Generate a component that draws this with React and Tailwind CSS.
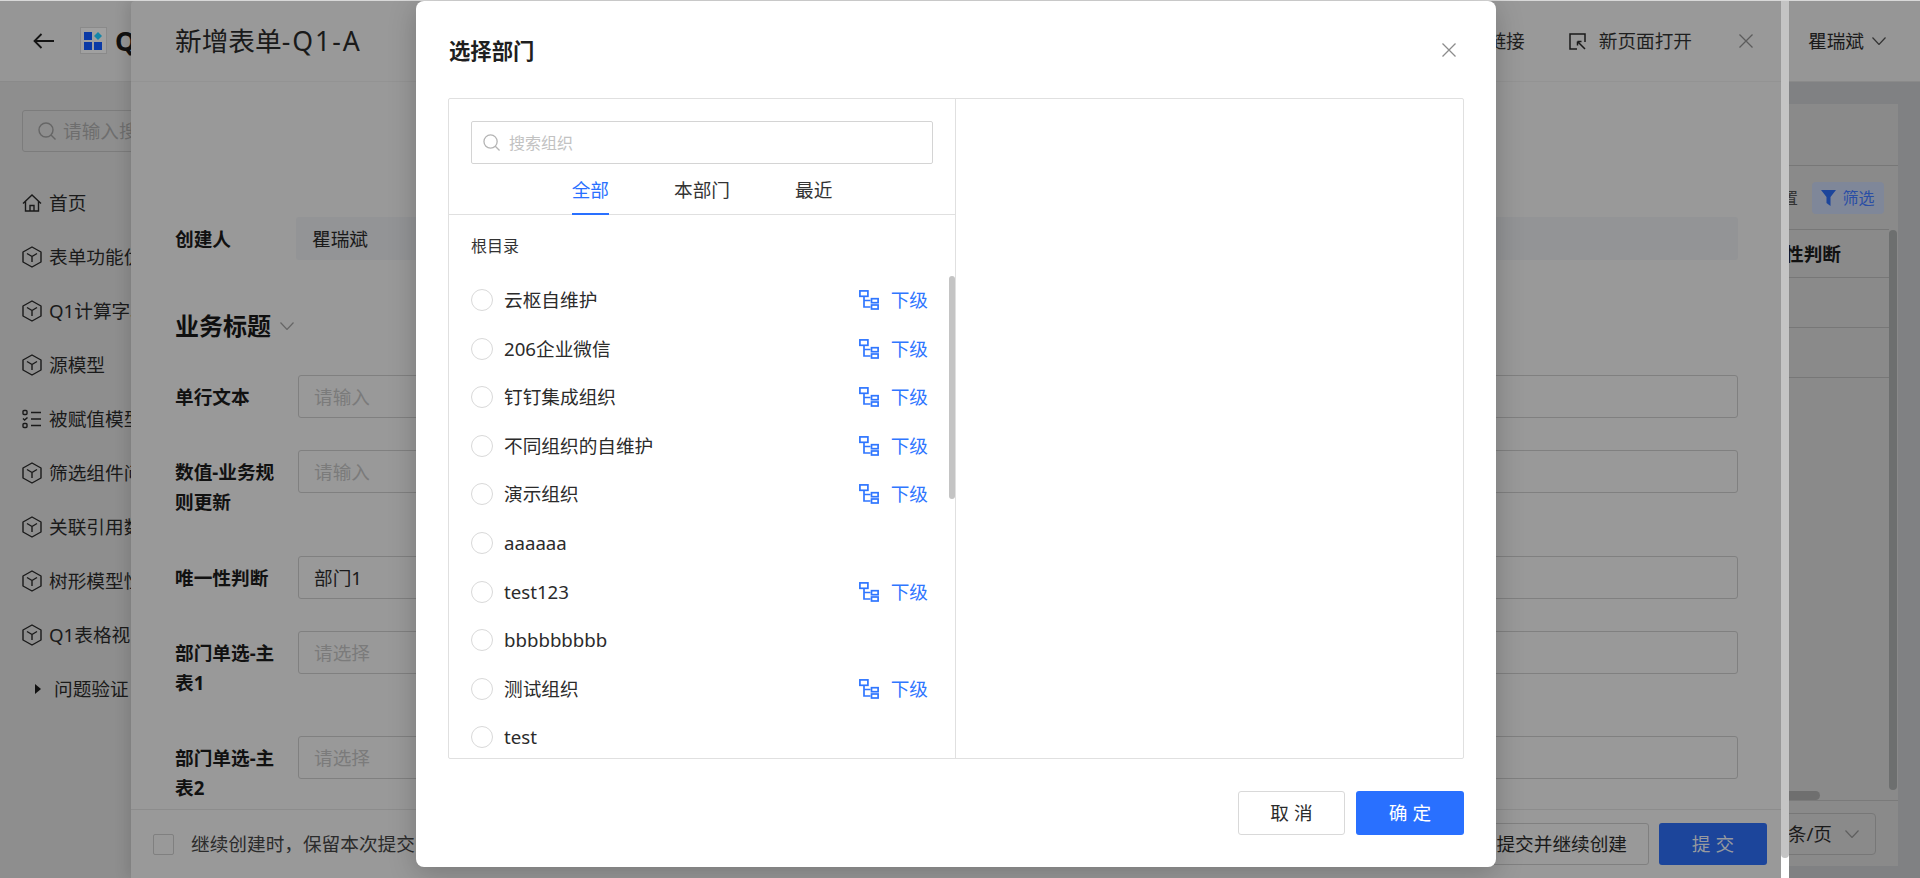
const menu = ['表单功能优化', 'Q1计算字段', '源模型', '被赋值模型', '筛选组件问题', '关联引用数据', '树形模型性能', 'Q1表格视图'];

const orgs = [
  { name: '云枢自维护', sub: true },
  { name: '206企业微信', sub: true },
  { name: '钉钉集成组织', sub: true },
  { name: '不同组织的自维护', sub: true },
  { name: '演示组织', sub: true },
  { name: 'aaaaaa', sub: false },
  { name: 'test123', sub: true },
  { name: 'bbbbbbbbb', sub: false },
  { name: '测试组织', sub: true },
  { name: 'test', sub: false },
];

const ArrowIcon = () => (
  <svg width="21" height="16" viewBox="0 0 21 16" fill="none" stroke="#141414" strokeWidth="1.8">
    <path d="M21 8H1.5M8.5 1L1.5 8l7 7" />
  </svg>
);

const HomeIcon = () => (
  <svg width="20" height="20" viewBox="0 0 20 20" fill="none" stroke="#1a1a1a" strokeWidth="1.4" className="shrink-0">
    <path d="M1 10.5L10 2l9 8.5M3.5 8.5V18h13V8.5M8 18v-5.5h4V18" />
  </svg>
);

const CubeIcon = () => (
  <svg width="20" height="22" viewBox="0 0 20 22" fill="none" stroke="#1a1a1a" strokeWidth="1.4" strokeLinejoin="round" className="shrink-0">
    <path d="M10 1l9 5v10l-9 5-9-5V6z" />
    <path d="M5 7.5l5 3 5-3M10 10.5V16" />
  </svg>
);

const ListIcon = () => (
  <svg width="20" height="20" viewBox="0 0 20 20" fill="none" stroke="#1a1a1a" strokeWidth="1.4" className="shrink-0">
    <rect x="1" y="1.5" width="4" height="4" rx="1" />
    <path d="M1 9.5l1.6 1.6L5.5 8.4" />
    <rect x="1" y="14.5" width="4" height="4" rx="1" />
    <path d="M9 3.5h10M9 10h10M9 16.5h10" />
  </svg>
);

const SearchIcon = ({ color, size = 18 }) => (
  <svg width={size} height={size} viewBox="0 0 18 18" fill="none" stroke={color} strokeWidth="1.4" className="shrink-0">
    <circle cx="8" cy="8" r="7" />
    <path d="M13 13l4.5 4.5" />
  </svg>
);

const CloseIcon = ({ color }) => (
  <svg width="14" height="14" viewBox="0 0 14 14" fill="none" stroke={color} strokeWidth="1.3" className="shrink-0">
    <path d="M0.5 0.5l13 13M13.5 0.5l-13 13" />
  </svg>
);

const ChevronIcon = ({ color }) => (
  <svg width="14" height="8" viewBox="0 0 14 8" fill="none" stroke={color} strokeWidth="1.2" className="shrink-0">
    <path d="M0.5 0.5L7 7.5l6.5-7" />
  </svg>
);

const TreeIcon = () => (
  <svg width="20" height="20" viewBox="0 0 20 20" fill="none" stroke="#2f76ff" strokeWidth="1.7" className="shrink-0">
    <rect x="0.9" y="0.9" width="8" height="5.4" />
    <path d="M5 6.3V17h6.5M5 10.5h6.5" />
    <rect x="12.5" y="8.7" width="6.6" height="4" />
    <rect x="12.5" y="15" width="6.6" height="4" />
  </svg>
);

const Logo = () => (
  <div className="flex h-[27px] w-[27px] items-center justify-center border border-[#8a8a8a] bg-[#a0a0a0]">
    <svg width="19" height="19" viewBox="0 0 19 19">
      <rect x="0" y="1" width="8" height="8" fill="#0b3aa6" />
      <rect x="0" y="11" width="8" height="8" fill="#0b3aa6" />
      <rect x="10" y="11" width="8" height="8" fill="#0b3aa6" />
      <path d="M14 1l4 4-4 4-4-4z" fill="#1486a8" />
    </svg>
  </div>
);

const Row = ({ label, placeholder, value, className }) => (
  <div className={`flex h-[43px] items-start ${className}`}>
    <div className="w-[123px] shrink-0 pt-[7px] text-[18.67px] font-bold leading-[30px] text-[#111]">{label}</div>
    <div className="flex h-[43px] flex-1 items-center rounded-[3px] border border-[#808080] px-[15px] text-[18.67px]">
      {value ? <span className="text-[#1a1a1a]">{value}</span> : <span className="text-[#7b7b7b]">{placeholder}</span>}
    </div>
  </div>
);

const Page = () => (
  <div className="flex h-full flex-col bg-[#808183]">
    <header className="flex h-[82px] shrink-0 items-center border-b border-[#8a8a8a] bg-[#969696] pl-[33px] pr-[34px]">
      <ArrowIcon />
      <div className="ml-[26px]"><Logo /></div>
      <span className="ml-[8px] text-[26.67px] font-bold text-[#111]">Q1</span>
      <span className="ml-auto text-[18.67px] text-[#1a1a1a]">瞿瑞斌</span>
      <span className="ml-[8px]"><ChevronIcon color="#333" /></span>
    </header>
    <div className="flex min-h-0 flex-1">
      <aside className="w-[240px] shrink-0 bg-[#8e8e8e] pl-[22px] pt-[28px]">
        <div className="flex h-[42px] items-center rounded-[3px] border border-[#7c7c7c] pl-[15px]">
          <SearchIcon color="#666" />
          <span className="ml-[7px] whitespace-nowrap text-[18.67px] text-[#6e6e6e]">请输入搜索</span>
        </div>
        <div className="mt-[24px] flex h-[54px] items-center gap-[7px] text-[18.67px] text-[#1a1a1a]">
          <HomeIcon />首页
        </div>
        {menu.map((m, i) => (
          <div key={m} className="flex h-[54px] items-center gap-[7px] whitespace-nowrap text-[18.67px] text-[#1a1a1a]">
            {i === 3 ? <ListIcon /> : <CubeIcon />}
            {m}
          </div>
        ))}
        <div className="flex h-[54px] items-center whitespace-nowrap pl-[13px] text-[18.67px] text-[#1a1a1a]">
          <span className="h-0 w-0 border-y-[5px] border-l-[6px] border-y-transparent border-l-[#111]" />
          <span className="ml-[13px]">问题验证</span>
        </div>
      </aside>
      <main className="mb-[12px] mr-[22px] mt-[22px] flex min-w-0 flex-1 flex-col bg-[#8a8a8a] text-[18.67px] text-[#1a1a1a]">
        <div className="h-[62px] shrink-0 border-b border-[#777]" />
        <div className="flex h-[63px] shrink-0 items-center justify-end pr-[14px]">
          <span className="text-[16px] text-[#333]">设置</span>
          <div className="ml-[14px] flex h-[32px] w-[72px] items-center justify-center gap-[6px] rounded-[4px] bg-[#7f8799] text-[16px] text-[#2a4ea5]">
            <svg width="15" height="16" viewBox="0 0 15 16"><path d="M0 0h15L9.5 7v9L5.5 13V7z" fill="#1c459b" /></svg>
            筛选
          </div>
        </div>
        <div className="mr-[9px] flex h-[49px] shrink-0 items-center justify-end whitespace-nowrap border-y border-[#777] pr-[48px] font-bold text-[#111]">唯一性判断</div>
        <div className="mr-[9px] h-[50px] shrink-0 border-b border-[#777]" />
        <div className="mr-[9px] h-[50px] shrink-0 border-b border-[#777]" />
        <div className="flex-1" />
        <div className="flex h-[66px] shrink-0 items-center justify-end border-t border-[#7a7a7a] pr-[22px]">
          <div className="flex h-[42px] w-[200px] items-center justify-end whitespace-nowrap rounded-[4px] border border-[#777] pr-[16px]">
            10条/页
            <span className="ml-[13px]"><ChevronIcon color="#5f5f5f" /></span>
          </div>
        </div>
      </main>
    </div>
    <div className="absolute left-[1889px] top-[230px] h-[560px] w-[8px] rounded-full bg-[#6d6f6f]" />
    <div className="absolute left-[1700px] top-[791px] h-[9px] w-[120px] rounded-full bg-[#6f6f6f]" />
  </div>
);

const Drawer = () => (
  <div className="absolute bottom-0 left-[131px] top-px flex w-[1650px] flex-col rounded-tl-[4px] bg-[#999] shadow-[-4px_0_14px_rgba(0,0,0,0.12)]">
    <div className="flex h-[81px] shrink-0 items-center border-b border-[#939393] pl-[44px] pr-[28px]">
      <h1 className="text-[26.67px] text-[#1a1a1a]">新增表单<span className="tracking-[2px]">-Q1-A</span></h1>
      <div className="ml-auto flex items-center text-[18.67px] text-[#1f1f1f]">
        <span>复制链接</span>
        <svg className="ml-[44px]" width="17" height="17" viewBox="0 0 17 17" fill="none" stroke="#1a1a1a" strokeWidth="1.5">
          <path d="M16 9V1H1v15h7" />
          <path d="M8.5 8.5l7.5 7.5M8.5 8.5h4M8.5 8.5v4" />
        </svg>
        <span className="ml-[13px]">新页面打开</span>
        <span className="ml-[47px]"><CloseIcon color="#5c5c5c" /></span>
      </div>
    </div>
    <div className="min-h-0 flex-1 overflow-hidden pl-[44px] pr-[43px] pt-[135px]">
      <div className="flex h-[43px] items-center">
        <div className="w-[121px] shrink-0 text-[18.67px] font-bold text-[#111]">创建人</div>
        <div className="flex h-[43px] flex-1 items-center rounded-[3px] bg-[#939496] pl-[16px] text-[18.67px] text-[#1a1a1a]">瞿瑞斌</div>
      </div>
      <div className="mt-[50px] flex h-[32px] items-center">
        <h2 className="text-[24px] font-bold text-[#0f0f0f]">业务标题</h2>
        <span className="ml-[9px]"><ChevronIcon color="#666" /></span>
      </div>
      <Row className="mt-[33px]" label="单行文本" placeholder="请输入" />
      <Row className="mt-[32px]" label={<>数值-业务规<br />则更新</>} placeholder="请输入" />
      <Row className="mt-[63px]" label="唯一性判断" value="部门1" />
      <Row className="mt-[32px]" label={<>部门单选-主<br />表1</>} placeholder="请选择" />
      <Row className="mt-[62px]" label={<>部门单选-主<br />表2</>} placeholder="请选择" />
    </div>
    <div className="flex h-[69px] shrink-0 items-center border-t border-[#8c8c8c] pl-[22px] pr-[14px] text-[18.67px]">
      <span className="h-[21px] w-[21px] rounded-[2px] border border-[#808080]" />
      <span className="ml-[17px] text-[#2b2b2b]">继续创建时，保留本次提交的内容</span>
      <div className="ml-auto flex h-[42px] w-[170px] items-center justify-end rounded-[3px] border border-[#808080] pr-[21px] text-[#1a1a1a]">提交并继续创建</div>
      <div className="ml-[10px] flex h-[42px] w-[108px] items-center justify-center rounded-[3px] bg-[#1c459b] pl-[5px] tracking-[5px] text-[#979a9f]">提交</div>
    </div>
  </div>
);

const Modal = () => (
  <div className="absolute left-[416px] top-px flex h-[866px] w-[1080px] flex-col rounded-[8px] bg-white shadow-[0_6px_28px_rgba(0,0,0,0.22)]">
    <div className="flex h-[97px] shrink-0 items-center justify-between pl-[33px] pr-[40px]">
      <h3 className="pt-[2px] text-[21.33px] font-bold text-[#1f1f1f]">选择部门</h3>
      <CloseIcon color="#8c8c8c" />
    </div>
    <div className="mx-[32px] flex h-[661px] shrink-0 overflow-hidden rounded-[2px] border border-[#e0e0e0]">
      <div className="relative w-[507px] shrink-0 overflow-hidden border-r border-[#e0e0e0]">
        <div className="mx-[22px] mt-[22px] flex h-[43px] items-center rounded-[2px] border border-[#d4d4d4] pl-[11px]">
          <SearchIcon color="#b5b5b5" size={17} />
          <span className="ml-[9px] text-[16px] text-[#c2c2c2]">搜索组织</span>
        </div>
        <div className="flex h-[51px] justify-center gap-[65px] border-b border-[#e0e0e0] text-[18.67px] text-[#333]">
          <span className="-mb-px flex items-center border-b-2 border-[#2970ff] pt-[2px] text-[#2970ff]">全部</span>
          <span className="flex items-center pt-[2px]">本部门</span>
          <span className="flex items-center pt-[2px]">最近</span>
        </div>
        <div className="pl-[22px] pt-[19px] text-[16px] leading-[24px] text-[#333]">根目录</div>
        <div className="mt-[18px]">
          {orgs.map((o) => (
            <div key={o.name} className="flex h-[48.55px] items-center pl-[22px] pr-[27px]">
              <span className="h-[22px] w-[22px] rounded-full border border-[#d9d9d9]" />
              <span className="ml-[11px] text-[18.67px] text-[#2b2b2b]">{o.name}</span>
              {o.sub && (
                <span className="ml-auto flex items-center gap-[12px] text-[18.67px] text-[#2f76ff]">
                  <TreeIcon />下级
                </span>
              )}
            </div>
          ))}
        </div>
        <div className="absolute right-0 top-[177px] h-[223px] w-[6px] rounded-full bg-[#c4c4c4]" />
      </div>
      <div className="flex-1" />
    </div>
    <div className="mr-[32px] mt-[32px] flex justify-end gap-[11px] text-[18.67px]">
      <button className="h-[44px] w-[107px] rounded-[3px] border border-[#d9d9d9] bg-white pl-[5px] tracking-[5px] text-[#2b2b2b]">取消</button>
      <button className="h-[44px] w-[108px] rounded-[3px] bg-[#2970ff] pl-[5px] tracking-[5px] text-white">确定</button>
    </div>
  </div>
);

export default function App() {
  return (
    <div className="relative h-screen w-full overflow-hidden font-['Noto_Sans','Noto_Sans_CJK_SC',sans-serif]">
      <Page />
      <Drawer />
      <div className="absolute bottom-0 left-[1781px] top-0 w-[8px] bg-white">
        <div className="h-[858px] rounded-b-[4px] bg-[#c4c4c4]" />
      </div>
      <div className="absolute inset-x-0 top-0 h-px bg-[#d8d8d8]" />
      <Modal />
    </div>
  );
}
